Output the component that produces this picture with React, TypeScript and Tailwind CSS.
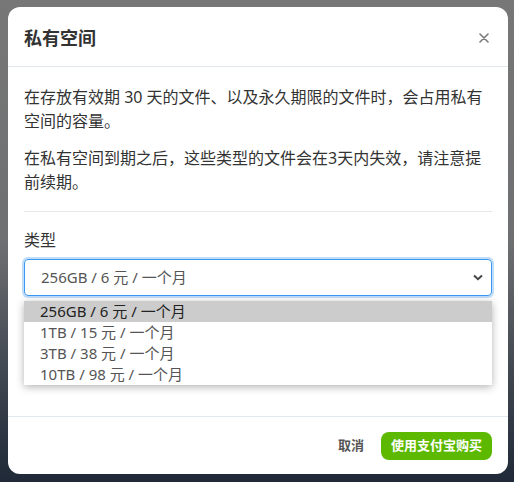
import React from "react";

const options = [
  "256GB / 6 元 / 一个月",
  "1TB / 15 元 / 一个月",
  "3TB / 38 元 / 一个月",
  "10TB / 98 元 / 一个月",
];

const App = () => {
  return (
    <div
      className="w-[514px] h-[482px] bg-gradient-to-b from-[#777777] via-[#6e6f71] to-[#1f2937] pt-[7px] px-2 overflow-hidden"
      style={{ fontFamily: '"Noto Sans", "Noto Sans CJK SC", sans-serif' }}
    >
      <div className="w-[500px] h-[467px] bg-white rounded-xl flex flex-col text-[#333]">
        <header className="h-[60px] flex items-center justify-between px-4 border-b border-[#e2e8f0]">
          <h2 className="text-lg font-bold text-[#333] pt-[2px]">私有空间</h2>
          <svg width="10" height="10" viewBox="0 0 10 10" className="mr-[3px] mt-[2px]">
            <path d="M1 1L9 9M9 1L1 9" stroke="#7a7a7a" strokeWidth="1.6" strokeLinecap="round" />
          </svg>
        </header>
        <div className="flex-1 px-4 pt-[18px]">
          <p className="text-base leading-6">
            在存放有效期 30 天的文件、以及永久期限的文件时，会占用私有空间的容量。
          </p>
          <p className="text-base leading-6 mt-[13px]">
            在私有空间到期之后，这些类型的文件会在3天内失效，请注意提前续期。
          </p>
          <hr className="mt-[17px] border-[#e5e7eb]" />
          <label className="block text-base leading-6 mt-[16px]">类型</label>
          <div className="relative mt-[7px]">
            <div className="h-[37px] rounded border border-[#3b97f0] ring-2 ring-[#bfdcf8] flex items-center justify-between pl-4 pr-2 text-[15px] text-[#555]">
              <span>256GB / 6 元 / 一个月</span>
              <svg width="10" height="7" viewBox="0 0 10 7">
                <path d="M1 1.5L5 5.2L9 1.5" stroke="#444" strokeWidth="2" fill="none" />
              </svg>
            </div>
            <ul className="absolute left-0 right-0 top-[42px] bg-white shadow-[0_2px_8px_rgba(0,0,0,0.3)] text-[15px]">
              {options.map((o, i) => (
                <li
                  key={o}
                  className={
                    i === 0
                      ? "h-[21px] leading-[21px] pl-4 bg-[#cccccc] text-[#222]"
                      : "h-[21px] leading-[21px] pl-4 text-[#555]"
                  }
                >
                  {o}
                </li>
              ))}
            </ul>
          </div>
        </div>
        <footer className="h-[58px] border-t border-[#e2e8f0] flex items-center justify-end gap-[17px] px-4">
          <button className="text-[13px] font-bold text-[#555]">取消</button>
          <button className="h-[28px] px-[10px] rounded-lg bg-[#5cb900] text-white text-[13px] font-bold">
            使用支付宝购买
          </button>
        </footer>
      </div>
    </div>
  );
};

export default App;
